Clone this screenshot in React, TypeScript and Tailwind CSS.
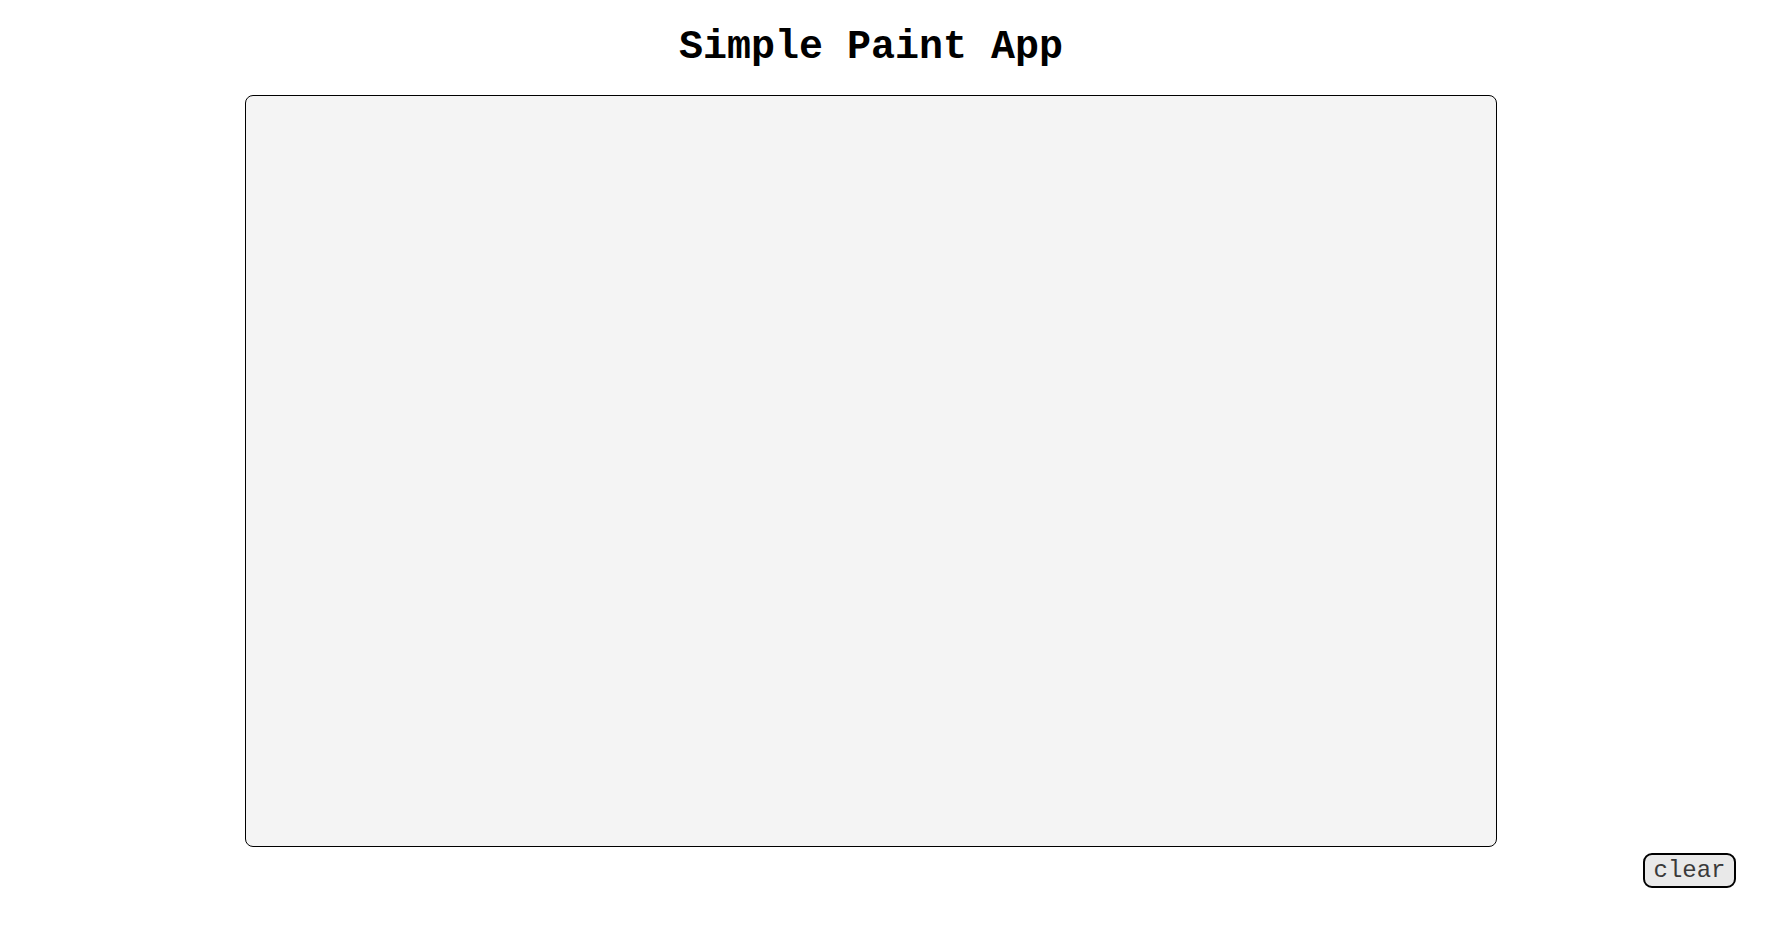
import React from 'react'

export default function App() {
  return (
    <div className="w-full h-[946px] bg-white flex flex-col font-['Liberation_Mono',monospace] text-black overflow-hidden">
      <h1 className="pt-[25px] pr-[32px] text-center text-[40px] leading-[45px] font-bold">Simple Paint App</h1>
      <div className="mt-[25px] pr-[32px] flex justify-center">
        <div className="w-[1252px] h-[752px] border border-black rounded-lg bg-[#f4f4f4]" />
      </div>
      <div className="flex justify-end pr-[38px] mt-[6px]">
        <button className="w-[93px] h-[35px] border-2 border-black rounded-[9px] bg-[#e9e9e9] text-[24px] leading-none text-[#3a3a3a]">clear</button>
      </div>
    </div>
  )
}
